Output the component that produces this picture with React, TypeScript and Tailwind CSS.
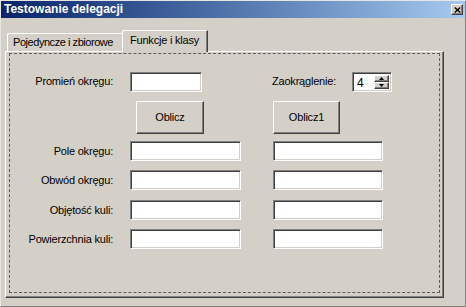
import React from 'react';

const sunken =
  'bg-white border border-t-[#808080] border-l-[#808080] border-r-white border-b-white shadow-[inset_1px_1px_0_#404040,inset_-1px_-1px_0_#d4d0c8]';
const raised =
  'bg-[#d4d0c8] border border-t-white border-l-white border-r-[#404040] border-b-[#404040] shadow-[inset_-1px_-1px_0_#808080]';

const TextBox = ({ w, h = 'h-[20px]', cls = '' }: { w: string; h?: string; cls?: string }) => (
  <div className={`${sunken} ${w} ${h} ${cls}`} />
);

const Label = ({ text }: { text: string }) => (
  <div className="w-[103px] shrink-0 text-right leading-[13px]">{text}</div>
);

const Spinner = () => (
  <div className={`${sunken} w-[40px] h-[20px] flex mt-[1px] p-[2px]`}>
    <div className="flex-1 bg-white pl-[2px] leading-[16px] text-[12px]">4</div>
    <div className="w-[15px] flex flex-col">
      <div className={`${raised} h-[8px] flex items-center justify-center`}>
        <svg width="5" height="3" viewBox="0 0 5 3">
          <path d="M2.5 0 L5 3 L0 3 Z" fill="#000" />
        </svg>
      </div>
      <div className={`${raised} h-[8px] flex items-center justify-center`}>
        <svg width="5" height="3" viewBox="0 0 5 3">
          <path d="M0 0 L5 0 L2.5 3 Z" fill="#000" />
        </svg>
      </div>
    </div>
  </div>
);

const results = ['Pole okręgu:', 'Obwód okręgu:', 'Objętość kuli:', 'Powierzchnia kuli:'];
const rowGaps = ['mt-[7px]', 'mt-[9px]', 'mt-[10px]', 'mt-[9px]'];

export default function App() {
  return (
    <div className="w-[466px] h-[307px] bg-[#d4d0c8] text-black text-[11px] tracking-[-0.2px] font-['Liberation_Sans',Arial,sans-serif] overflow-hidden">
      <div className="w-[466px] h-[307px] flex flex-col border-t border-l border-t-[#e8e6e2] border-l-[#e8e6e2] border-r border-b border-r-[#808080] border-b-[#808080]">
        {/* title bar */}
        <div className="h-[17px] shrink-0 flex items-center justify-between pl-[3px] pr-[2px] bg-gradient-to-r from-[#0a246a] to-[#a6caf0]">
          <span className="text-white font-bold text-[12px] tracking-[0px] leading-[13px]">Testowanie delegacji</span>
          <div className={`${raised} w-[12px] h-[11px] flex items-center justify-center`}>
            <svg width="7" height="6" viewBox="0 0 7 6">
              <path d="M0.8 0.5 L6.2 5.5 M6.2 0.5 L0.8 5.5" stroke="#000" strokeWidth="1.4" />
            </svg>
          </div>
        </div>

        <div className="pl-[4px] pt-[12px]">
          {/* tabs */}
          <div className="flex items-end h-[21px]">
            <div className="ml-[2px] w-[116px] h-[18px] border-t border-l border-t-white border-l-white border-r border-r-[#404040] rounded-tl-[2px] pl-[5px] tracking-[-0.45px] leading-[17px] whitespace-nowrap overflow-hidden">
              Pojedyncze i zbiorowe
            </div>
            <div className="relative z-10 -ml-[1px] -mb-[1px] w-[86px] h-[22px] bg-[#d4d0c8] border-t border-l border-t-white border-l-white border-r border-r-[#404040] shadow-[inset_-1px_0_0_#808080] rounded-tl-[2px] pl-[7px] leading-[19px] whitespace-nowrap">
              Funkcje i klasy
            </div>
          </div>

          {/* panel */}
          <div className="w-[439px] h-[247px] border-t border-l border-t-white border-l-white border-r border-b border-r-[#404040] border-b-[#404040] shadow-[inset_-1px_-1px_0_#808080] pt-[1px] pl-[3px] pr-[3px] pb-[4px]">
            <div className="h-full border border-dashed border-[#5c5c5c]">
              <div className="flex items-center mt-[17px]">
                <Label text="Promień okręgu:" />
                <TextBox w="w-[72px]" cls="ml-[17px]" />
                <div className="ml-[70px] w-[80px] leading-[13px]">Zaokrąglenie:</div>
                <Spinner />
              </div>

              <div className="flex mt-[9px]">
                <button className={`${raised} ml-[126px] w-[68px] h-[33px] text-[11px]`}>Oblicz</button>
                <button className={`${raised} ml-[69px] w-[67px] h-[33px] text-[11px]`}>Oblicz1</button>
              </div>

              {results.map((label, i) => (
                <div key={label} className={`flex items-center ${rowGaps[i]}`}>
                  <Label text={label} />
                  <TextBox w="w-[111px]" cls="ml-[17px]" />
                  <TextBox w="w-[110px]" cls="ml-[32px]" />
                </div>
              ))}
            </div>
          </div>
        </div>
      </div>
    </div>
  );
}
